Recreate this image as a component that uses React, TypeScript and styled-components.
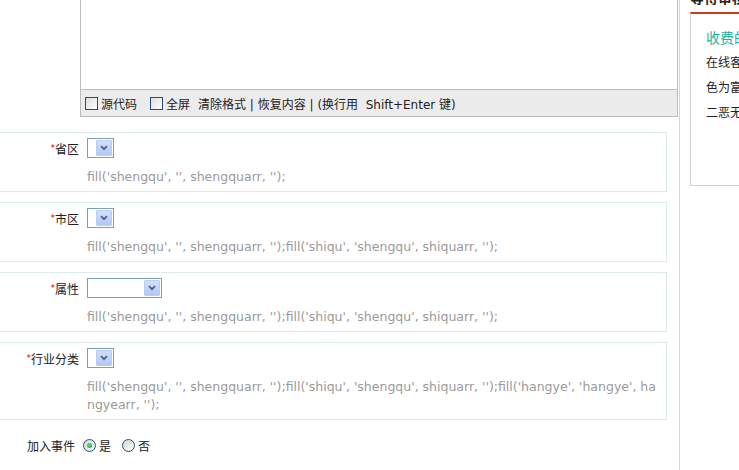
import styled, { createGlobalStyle } from 'styled-components';

const GlobalStyle = createGlobalStyle`
  html, body {
    margin: 0;
    padding: 0;
    background: #fff;
    overflow: hidden;
  }
  body {
    font-family: "DejaVu Sans", "Noto Sans CJK SC", sans-serif;
    font-size: 12px;
    color: #333;
  }
`;

const Page = styled.div`
  display: flex;
  width: 960px;
  margin-top: -40px;
`;

const LeftCol = styled.div`
  width: 679px;
  min-height: 560px;
  flex-shrink: 0;
  border-right: 1px solid #d6d6d6;
`;

const RightCol = styled.div`
  width: 250px;
  flex-shrink: 0;
  padding-left: 10px;
`;

const Editor = styled.div`
  margin: 10px 0 0 80px;
  width: 596px;
  border: 1px solid #bdbdbd;
`;

const EditorBody = styled.div`
  height: 118px;
  background: #fff;
`;

const Toolbar = styled.div`
  display: flex;
  align-items: center;
  height: 26px;
  padding-left: 4px;
  border-top: 1px solid #bdbdbd;
  background: #ececec;
  color: #222;
  white-space: pre;
`;

const ToolCheck = styled.label<{ $gap: number }>`
  display: flex;
  align-items: center;
  margin-right: ${({ $gap }) => $gap}px;
`;

const CheckBox = styled.span`
  width: 11px;
  height: 11px;
  margin-right: 3px;
  border: 1px solid #1c5180;
  background: linear-gradient(135deg, #dcdcd7, #ffffff);
`;

const RowList = styled.div`
  display: flex;
  flex-direction: column;
  gap: 10px;
  margin: 15px 12px 0 -1px;
`;

const Row = styled.div`
  display: flex;
  padding: 5px 4px 5px 0;
  border: 1px solid #dcebec;
`;

const Label = styled.div`
  width: 79px;
  flex-shrink: 0;
  text-align: right;
  line-height: 20px;
  color: #222;
  font-family: "Noto Sans CJK SC", sans-serif;
`;

const Star = styled.span`
  color: #e00000;
  font-family: "DejaVu Sans", sans-serif;
  font-size: 9px;
  vertical-align: 3px;
`;

const Field = styled.div`
  flex: 1;
  min-width: 0;
  margin-left: 8px;
`;

const Select = styled.div<{ $w: number }>`
  box-sizing: border-box;
  display: flex;
  justify-content: flex-end;
  width: ${({ $w }) => $w}px;
  height: 20px;
  padding: 1px;
  border: 1px solid #7f9db9;
  background: #fff;
`;

const ArrowBtn = styled.span`
  box-sizing: border-box;
  display: flex;
  align-items: center;
  justify-content: center;
  width: 16px;
  height: 16px;
  border: 1px solid #bccdf3;
  border-radius: 1px;
  background: linear-gradient(#d2defd, #b3c8f5);
`;

const Help = styled.div`
  margin-top: 10px;
  line-height: 18px;
  color: #9a9a9a;
  font-size: 12.5px;
  word-break: break-all;
`;

const EventRow = styled.div`
  display: flex;
  align-items: center;
  height: 20px;
  margin-top: 15px;
  padding-left: 27px;
  color: #222;
  font-family: "Noto Sans CJK SC", sans-serif;
`;

const EventLabel = styled.span`
  margin-right: 8px;
`;

const RadioItem = styled.label`
  display: flex;
  align-items: center;
  margin-right: 11px;
`;

const Radio = styled.span<{ $on?: boolean }>`
  position: relative;
  width: 11px;
  height: 11px;
  margin-right: 3px;
  border: 1px solid #1c5180;
  border-radius: 50%;
  background: linear-gradient(135deg, #d6d6d0, #ffffff);

  &::after {
    content: '';
    display: ${({ $on }) => ($on ? 'block' : 'none')};
    position: absolute;
    left: 3px;
    top: 3px;
    width: 5px;
    height: 5px;
    border-radius: 50%;
    background: radial-gradient(circle at 40% 40%, #5fe05f, #1e9a1e);
  }
`;

const PanelTitle = styled.div`
  margin-top: 26px;
  padding-bottom: 4px;
  line-height: 22px;
  font-size: 14px;
  font-weight: 700;
  color: #222;
  font-family: "Noto Sans CJK SC", sans-serif;
  white-space: nowrap;
`;

const PanelBox = styled.div`
  box-sizing: border-box;
  height: 174px;
  padding: 11px 0 0 15px;
  border-top: 2px solid #c9391b;
  border-left: 1px solid #d3d3d3;
  border-right: 1px solid #d3d3d3;
  border-bottom: 1px solid #d3d3d3;
  font-family: "Noto Sans CJK SC", sans-serif;
  white-space: nowrap;
  overflow: hidden;
`;

const PanelHead = styled.div`
  line-height: 24px;
  font-size: 14px;
  color: #1db3a0;
`;

const PanelLine = styled.div`
  line-height: 25px;
  color: #222;
`;

function Chevron() {
  return (
    <svg width="8" height="6" viewBox="0 0 8 6">
      <path d="M1 1.2 L4 4.2 L7 1.2" fill="none" stroke="#4d6185" strokeWidth="1.8" />
    </svg>
  );
}

const rows = [
  {
    label: '省区',
    width: 27,
    help: "fill('shengqu', '', shengquarr, '');",
  },
  {
    label: '市区',
    width: 27,
    help: "fill('shengqu', '', shengquarr, '');fill('shiqu', 'shengqu', shiquarr, '');",
  },
  {
    label: '属性',
    width: 75,
    help: "fill('shengqu', '', shengquarr, '');fill('shiqu', 'shengqu', shiquarr, '');",
  },
  {
    label: '行业分类',
    width: 27,
    help: "fill('shengqu', '', shengquarr, '');fill('shiqu', 'shengqu', shiquarr, '');fill('hangye', 'hangye', hangyearr, '');",
  },
];

export default function App() {
  return (
    <>
      <GlobalStyle />
      <Page>
        <LeftCol>
          <Editor>
            <EditorBody />
            <Toolbar>
              <ToolCheck $gap={13}>
                <CheckBox />
                源代码
              </ToolCheck>
              <ToolCheck $gap={8}>
                <CheckBox />
                全屏
              </ToolCheck>
              <span>清除格式 | 恢复内容 | (换行用  Shift+Enter 键)</span>
            </Toolbar>
          </Editor>

          <RowList>
            {rows.map((r) => (
              <Row key={r.label}>
                <Label>
                  <Star>*</Star>
                  {r.label}
                </Label>
                <Field>
                  <Select $w={r.width}>
                    <ArrowBtn>
                      <Chevron />
                    </ArrowBtn>
                  </Select>
                  <Help>{r.help}</Help>
                </Field>
              </Row>
            ))}
          </RowList>

          <EventRow>
            <EventLabel>加入事件</EventLabel>
            <RadioItem>
              <Radio $on />是
            </RadioItem>
            <RadioItem>
              <Radio />否
            </RadioItem>
          </EventRow>
        </LeftCol>

        <RightCol>
          <PanelTitle>等待审核的专利</PanelTitle>
          <PanelBox>
            <PanelHead>收费的专利服务</PanelHead>
            <PanelLine>在线客服为您解答</PanelLine>
            <PanelLine>色为富有特色的服务</PanelLine>
            <PanelLine>二恶无忧的专利申请</PanelLine>
          </PanelBox>
        </RightCol>
      </Page>
    </>
  );
}
